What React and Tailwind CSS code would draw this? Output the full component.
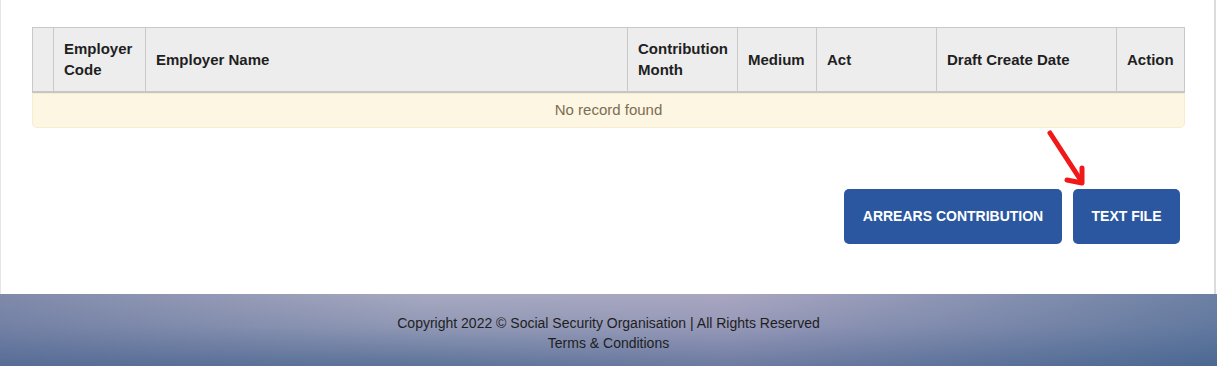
import React from "react";

const columns = [
  { label: "", width: "w-[21px]" },
  { label: "Employer Code", width: "w-[92px]" },
  { label: "Employer Name", width: "w-[482px]" },
  { label: "Contribution Month", width: "w-[110px]" },
  { label: "Medium", width: "w-[79px]" },
  { label: "Act", width: "w-[120px]" },
  { label: "Draft Create Date", width: "w-[180px]" },
  { label: "Action", width: "" },
];

function Arrow() {
  return (
    <svg
      className="absolute left-[1040px] top-[127px]"
      width="50"
      height="62"
      viewBox="0 0 50 62"
    >
      <line x1="9" y1="6" x2="39" y2="52" stroke="#f01818" strokeWidth="5" strokeLinecap="round" />
      <polyline
        points="26,53 41,56 41,41"
        fill="none"
        stroke="#f01818"
        strokeWidth="5"
        strokeLinecap="round"
        strokeLinejoin="round"
      />
    </svg>
  );
}

export default function App() {
  return (
    <div className="w-[1217px] h-[366px] flex flex-col font-['Liberation_Sans',Arial,sans-serif] bg-white">
      <div className="relative h-[294px] border-l border-[#e6e6e6] border-r-2 border-r-[#dcdcdc] mr-[1px] pt-[27px] pl-[31px] pr-[29px]">
        <table className="w-[1153px] border-collapse table-fixed text-[15px]">
          <thead>
            <tr className="bg-[#ededed] h-[64px] border-b-2 border-[#c6c6c6]">
              {columns.map((c, i) => (
                <th
                  key={i}
                  className={`${c.width} border border-[#c9c9c9] border-b-2 border-b-[#c6c6c6] px-[10px] text-left font-bold text-[#1f1f1f] leading-[21px] align-middle`}
                >
                  {c.label}
                </th>
              ))}
            </tr>
          </thead>
        </table>
        <div className="w-[1153px] h-[35px] bg-[#fdf6e3] border border-[#f7eccd] rounded-b-[5px] flex items-center justify-center text-[15px] text-[#7b6d52]">
          No record found
        </div>
        <Arrow />
        <div className="flex justify-end gap-[11px] mt-[61px] pr-[5px]">
          <button className="h-[55px] w-[218px] rounded-[5px] bg-[#2b57a1] text-white font-bold text-[14px] uppercase">
            Arrears Contribution
          </button>
          <button className="h-[55px] w-[107px] rounded-[5px] bg-[#2b57a1] text-white font-bold text-[14px] uppercase">
            Text File
          </button>
        </div>
      </div>
      <footer className="h-[72px] relative overflow-hidden bg-[linear-gradient(180deg,#a7a9c0_0%,#9098b5_45%,#5c7399_100%)]">
        <div className="absolute inset-0 bg-[linear-gradient(90deg,rgba(80,100,145,0.45)_0%,rgba(160,160,195,0)_35%,rgba(175,155,195,0.2)_60%,rgba(60,95,140,0.55)_100%)]" />
        <div className="relative flex flex-col items-center pt-[19px] text-[14px] leading-[20px] text-[#1e1e1e]">
          <p>Copyright 2022 © Social Security Organisation | All Rights Reserved</p>
          <p>Terms &amp; Conditions</p>
        </div>
      </footer>
    </div>
  );
}
